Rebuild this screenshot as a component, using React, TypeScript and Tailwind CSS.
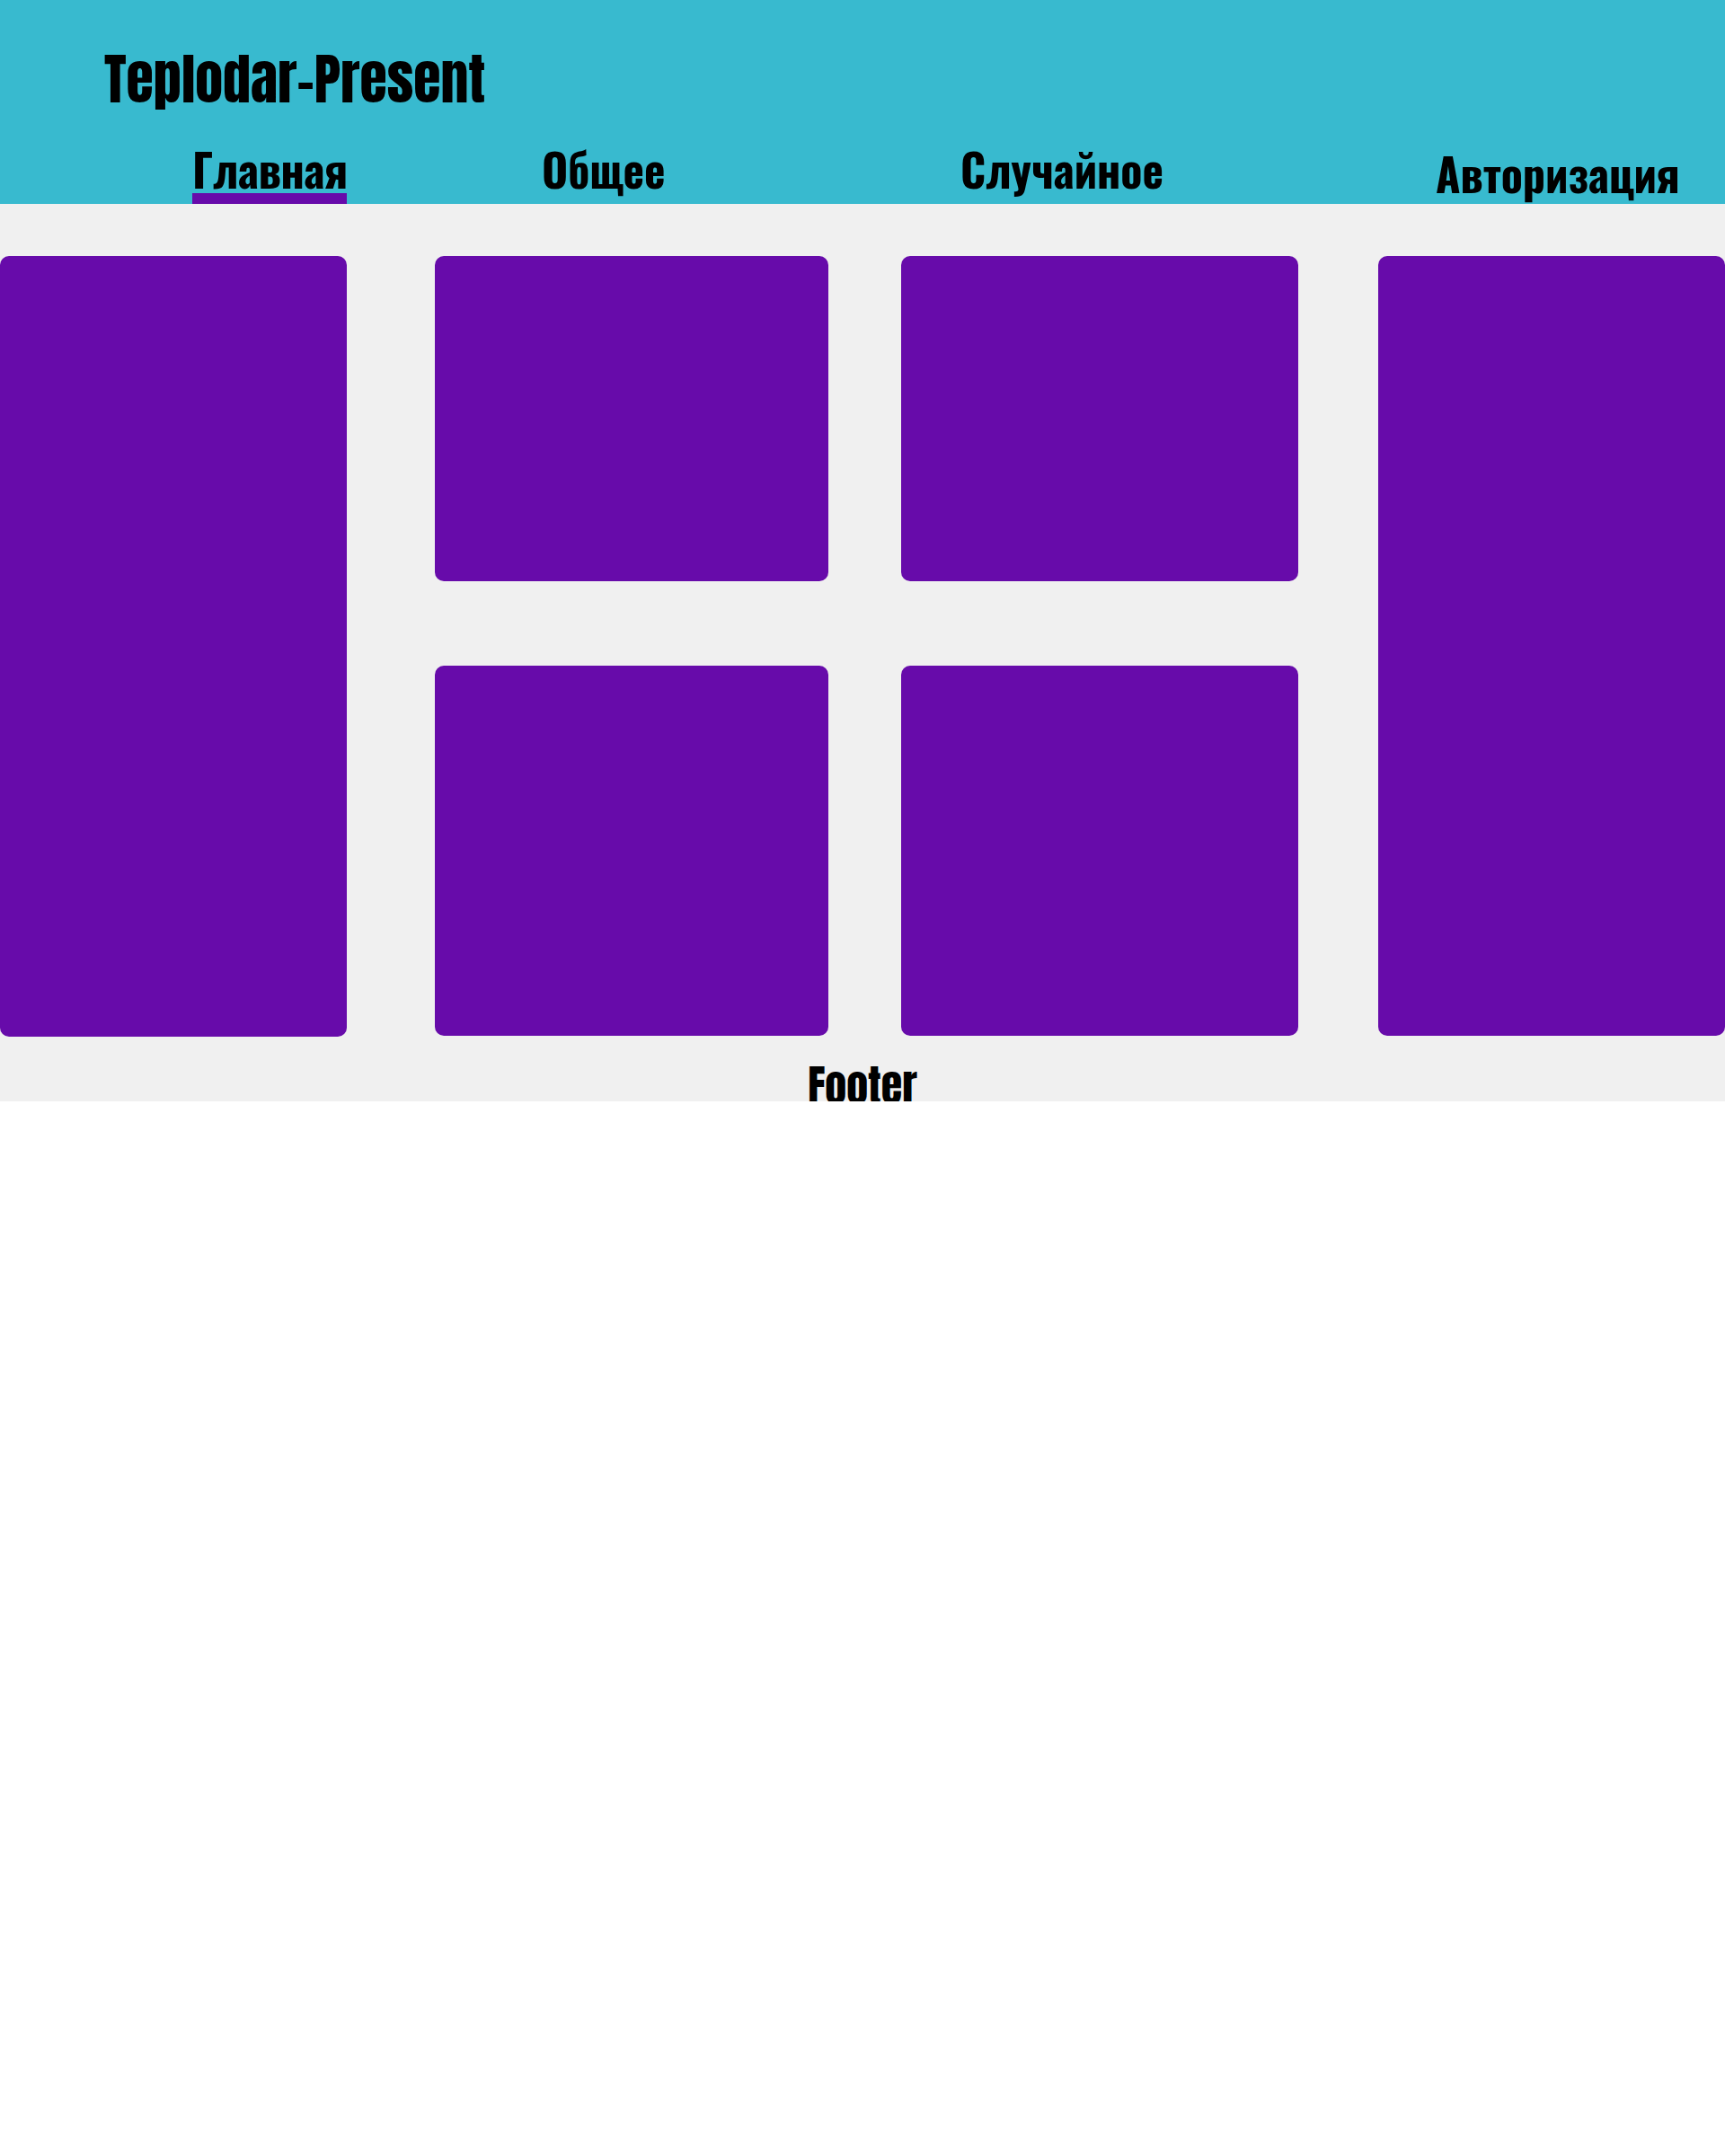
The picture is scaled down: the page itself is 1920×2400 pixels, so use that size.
export default function App() {
  const card = "rounded-[10px] bg-[#670BAA]";
  return (
    <div className="w-[1920px]">
      <header className="h-[227px] bg-[#38BACF] text-black">
        <div className="pl-[116px] pt-[55px] font-['Anton','Oswald',sans-serif] text-[62px] leading-[66px]">
          Teplodar-Present
        </div>
        <nav className="mt-[39px] flex items-start pl-[214px] font-['Oswald',sans-serif] text-[50px] font-bold leading-[55px]">
          <div className="w-[389px]">
            <div className="flex w-[172px] flex-col">
              <span className="tracking-[-0.3px]">Главная</span>
              <span className="h-[12px] w-[172px] bg-[#670BAA]" />
            </div>
          </div>
          <div className="w-[466px]">Общее</div>
          <div className="w-[529px]">Случайное</div>
          <div className="mt-[5px]">Авторизация</div>
        </nav>
      </header>
      <main className="bg-[#F0F0F0]">
        <div className="flex pt-[58px]">
          <div className={`${card} h-[869px] w-[386px]`} />
          <div className="ml-[98px] flex w-[438px] flex-col gap-[94px]">
            <div className={`${card} h-[362px]`} />
            <div className={`${card} h-[412px]`} />
          </div>
          <div className="ml-[81px] flex w-[442px] flex-col gap-[94px]">
            <div className={`${card} h-[362px]`} />
            <div className={`${card} h-[412px]`} />
          </div>
          <div className={`${card} ml-[89px] h-[868px] w-[386px]`} />
        </div>
        <footer className="flex h-[72px] items-end justify-center">
          <span className="translate-y-[6px] font-['Anton',sans-serif] text-[48px] leading-[46px]">Footer</span>
        </footer>
      </main>
    </div>
  );
}
